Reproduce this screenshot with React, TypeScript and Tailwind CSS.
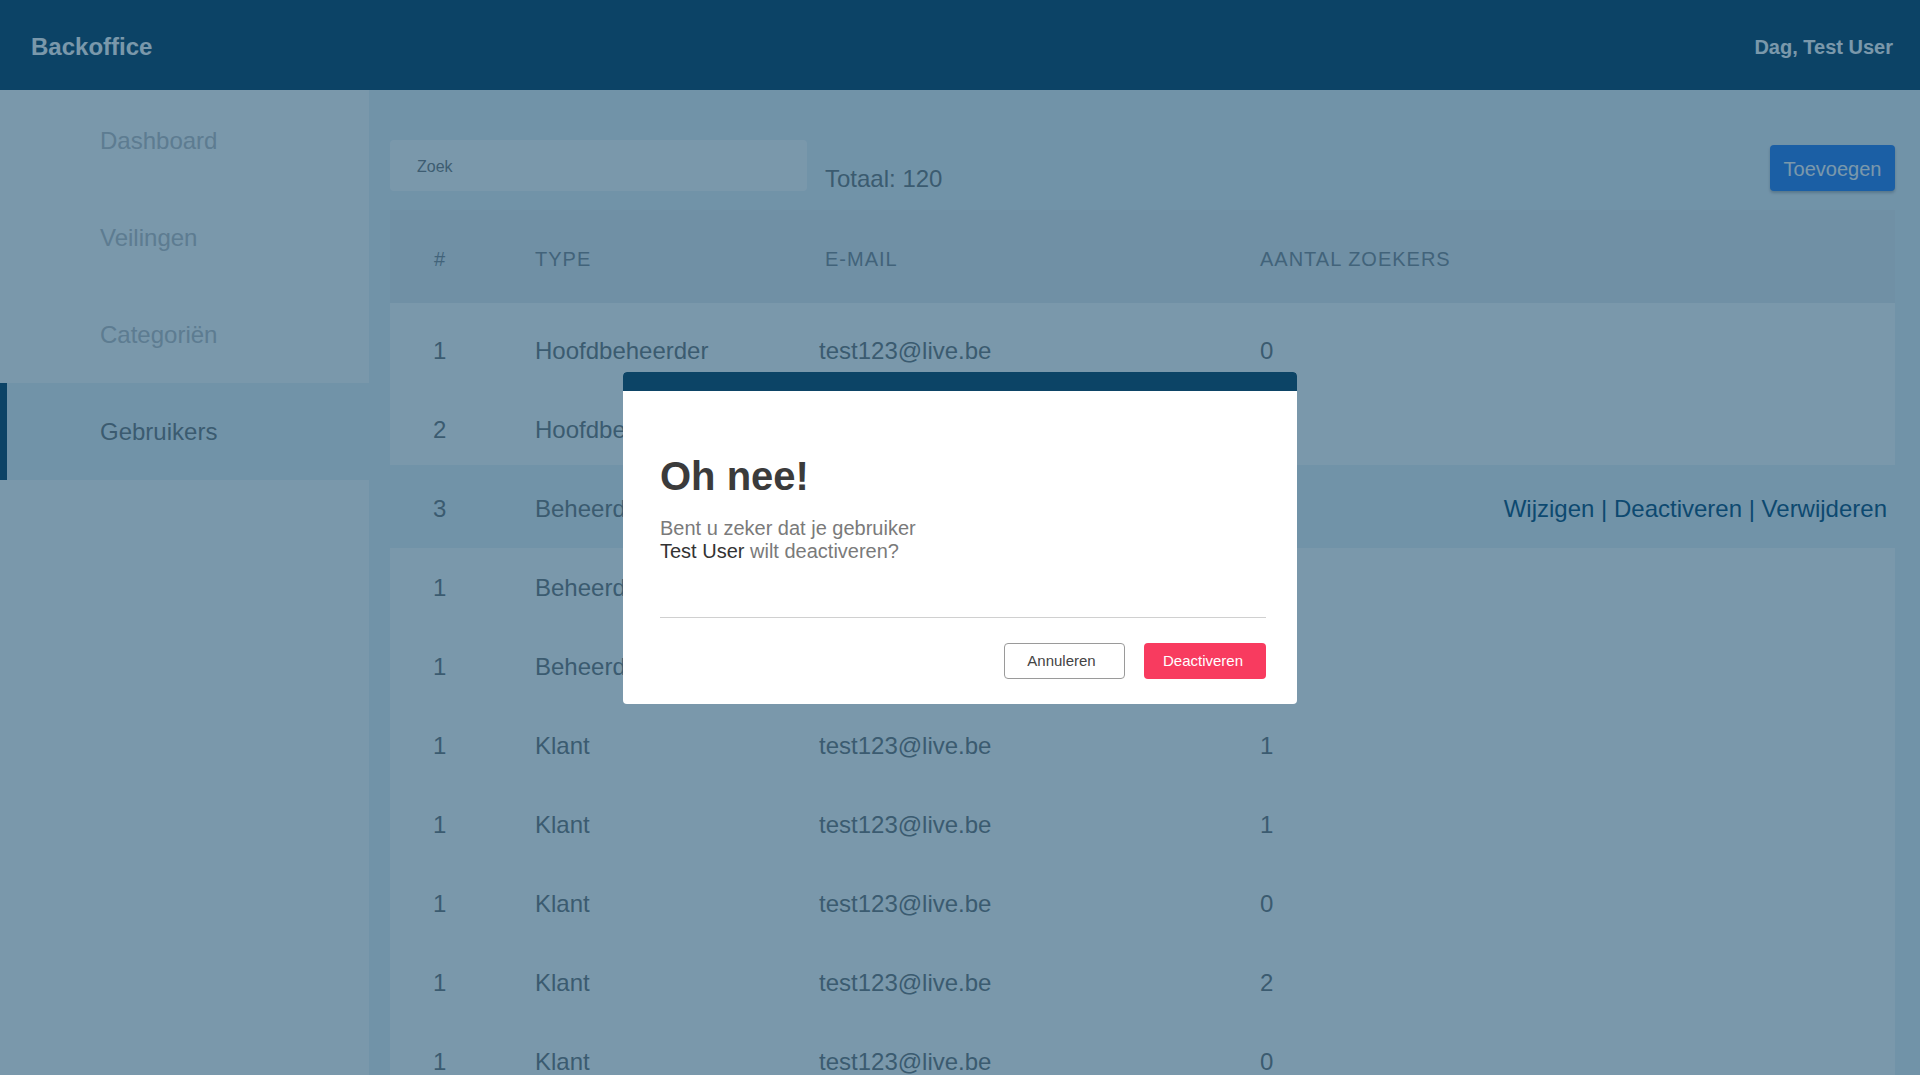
// ── Backoffice: Gebruikers with deactivate confirmation ──
import React from "react";

type User = { id: number; type: string; email: string; zoekers: number; hover?: boolean };

const nav = ["Dashboard", "Veilingen", "Categoriën", "Gebruikers"];

const users: User[] = [
  { id: 1, type: "Hoofdbeheerder", email: "test123@live.be", zoekers: 0 },
  { id: 2, type: "Hoofdbeheerder", email: "test123@live.be", zoekers: 0 },
  { id: 3, type: "Beheerder", email: "test123@live.be", zoekers: 0, hover: true },
  { id: 1, type: "Beheerder", email: "test123@live.be", zoekers: 1 },
  { id: 1, type: "Beheerder", email: "test123@live.be", zoekers: 0 },
  { id: 1, type: "Klant", email: "test123@live.be", zoekers: 1 },
  { id: 1, type: "Klant", email: "test123@live.be", zoekers: 1 },
  { id: 1, type: "Klant", email: "test123@live.be", zoekers: 0 },
  { id: 1, type: "Klant", email: "test123@live.be", zoekers: 2 },
  { id: 1, type: "Klant", email: "test123@live.be", zoekers: 0 },
];

function Sidebar() {
  return (
    <aside className="w-[369px] shrink-0 bg-white pt-[2px]">
      {nav.map((item) => {
        const active = item === "Gebruikers";
        return (
          <div
            key={item}
            className={`h-[97px] flex items-center pl-[100px] text-[24px] ${
              active ? "bg-[#ecf3f8] text-[#74797c] shadow-[inset_7px_0_0_#0c4466]" : "text-[#bec0c5]"
            }`}
          >
            {item}
          </div>
        );
      })}
    </aside>
  );
}

function UsersTable() {
  return (
    <div className="mt-[19px]">
      {/* Head */}
      <div className="flex items-center h-[93px] pt-[4px] bg-[#e8edf2] text-[20px] uppercase tracking-[1px] text-[#848b93]">
        <div className="w-[145px] pl-[44px]">#</div>
        <div className="w-[290px]">Type</div>
        <div className="w-[435px]">E-mail</div>
        <div>Aantal zoekers</div>
      </div>
      {/* Rows */}
      <div className="bg-white pt-[8px]">
        {users.map((u, i) => (
          <div
            key={i}
            className={`flex items-center h-[79px] text-[24px] text-[#74797c] ${
              u.hover ? "bg-[#ecf3f8] shadow-[0_-4px_0_0_#ecf3f8]" : ""
            }`}
          >
            <div className="w-[145px] pl-[43px]">{u.id}</div>
            <div className="w-[284px]">{u.type}</div>
            <div className="w-[441px]">{u.email}</div>
            <div>{u.zoekers}</div>
            {u.hover && (
              <div className="ml-auto pr-[8px] text-[#0e517c]">Wijzigen | Deactiveren | Verwijderen</div>
            )}
          </div>
        ))}
      </div>
    </div>
  );
}

function ConfirmModal() {
  return (
    <div className="w-[674px] rounded-[4px] bg-white overflow-hidden">
      <div className="h-[19px] bg-[#0c4466]" />
      <div className="pl-[37px] pr-[31px] pt-[66px] pb-[25px]">
        <h2 className="text-[40px] leading-[39px] font-bold text-[#3b3b3b]">Oh nee!</h2>
        <p className="mt-[21px] text-[20px] leading-[23px] text-[#7a7a7a]">
          Bent u zeker dat je gebruiker
          <br />
          <span className="text-[#333]">Test User</span> wilt deactiveren?
        </p>
        <div className="mt-[54px] h-px bg-[#d0d0d0]" />
        <div className="mt-[25px] flex justify-end gap-[19px]">
          <button className="w-[121px] h-[36px] pr-[6px] pt-[1px] rounded-[4px] border border-[#9a9a9a] bg-white text-[15px] text-[#444]">
            Annuleren
          </button>
          <button className="w-[122px] h-[36px] pr-[4px] pt-[1px] rounded-[4px] bg-[#f83b5f] text-[15px] text-white">
            Deactiveren
          </button>
        </div>
      </div>
    </div>
  );
}

export default function App() {
  return (
    <div className="relative h-[1075px] overflow-hidden font-['Liberation_Sans',Arial,sans-serif]">
      <header className="h-[90px] pt-[4px] bg-[#0c4466] flex items-center justify-between pl-[31px] pr-[27px] text-white font-bold">
        <span className="text-[24px]">Backoffice</span>
        <span className="text-[20px]">Dag, Test User</span>
      </header>

      <div className="flex h-[985px]">
        <Sidebar />
        <main className="flex-1 bg-[#ecf3f8] pl-[21px] pr-[25px] pt-[50px]">
          <div className="flex items-end">
            <input
              placeholder="Zoek"
              className="w-[417px] h-[51px] pt-[2px] rounded-[4px] bg-white pl-[27px] text-[16px] text-[#7a7d80] placeholder:text-[#7a7d80] outline-none"
            />
            <span className="ml-[18px] mb-[-2px] text-[24px] leading-[28px] text-[#74797c]">Totaal: 120</span>
            <button className="ml-auto w-[125px] h-[46px] pt-[2px] rounded-[4px] bg-[#2d80f2] text-white text-[20px] shadow-[0_2px_3px_rgba(0,0,0,0.25)]">
              Toevoegen
            </button>
          </div>
          <UsersTable />
        </main>
      </div>

      {/* Overlay + modal */}
      <div className="absolute inset-0 bg-[rgba(12,68,102,0.55)] flex items-center justify-center">
        <ConfirmModal />
      </div>
    </div>
  );
}
